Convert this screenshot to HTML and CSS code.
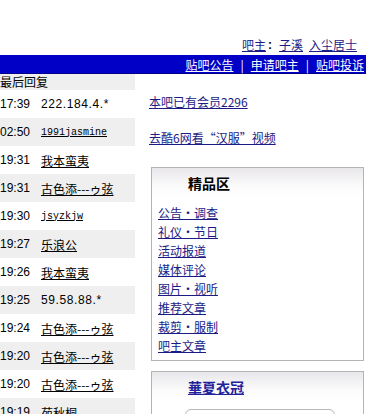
FILE: index.html
```html
<!DOCTYPE html>
<html>
<head>
<meta charset="utf-8">
<link rel="stylesheet" href="styles.css">
</head>
<body>
<div class="top">
  <div class="owners"><a href="#">吧主</a><b class="colon">:</b><a href="#">子溪</a><a class="gap" href="#">入尘居士</a></div>
</div>
<div class="nav">
  <a href="#">贴吧公告</a><span class="sep">|</span><a href="#">申请吧主</a><span class="sep">|</span><a href="#">贴吧投诉</a>
</div>
<div class="main">
  <div class="left">
    <div class="lhead">最后回复</div>
    <div class="row"><span class="t">17:39</span><span class="n ip">222.184.4.*</span></div>
    <div class="row g"><span class="t">02:50</span><a class="n mono" href="#">1991jasmine</a></div>
    <div class="row"><span class="t">19:31</span><a class="n" href="#">我本蛮夷</a></div>
    <div class="row g"><span class="t">19:31</span><a class="n" href="#">古色添---ゥ弦</a></div>
    <div class="row"><span class="t">19:30</span><a class="n mono" href="#">jsyzkjw</a></div>
    <div class="row g"><span class="t">19:27</span><a class="n" href="#">乐浪公</a></div>
    <div class="row"><span class="t">19:26</span><a class="n" href="#">我本蛮夷</a></div>
    <div class="row g"><span class="t">19:25</span><span class="n ip">59.58.88.*</span></div>
    <div class="row"><span class="t">19:24</span><a class="n" href="#">古色添---ゥ弦</a></div>
    <div class="row g"><span class="t">19:20</span><a class="n" href="#">古色添---ゥ弦</a></div>
    <div class="row"><span class="t">19:20</span><a class="n" href="#">古色添---ゥ弦</a></div>
    <div class="row g"><span class="t">19:19</span><a class="n" href="#">苑秋桐</a></div>
  </div>
  <div class="right">
    <div class="info"><a href="#">本吧已有会员2296</a></div>
    <div class="info"><a href="#">去酷6网看“汉服”视频</a></div>
    <div class="box">
      <div class="boxhead"><span class="title">精品区</span></div>
      <ul class="links">
        <li><a href="#">公告・调查</a></li>
        <li><a href="#">礼仪・节日</a></li>
        <li><a href="#">活动报道</a></li>
        <li><a href="#">媒体评论</a></li>
        <li><a href="#">图片・视听</a></li>
        <li><a href="#">推荐文章</a></li>
        <li><a href="#">裁剪・服制</a></li>
        <li><a href="#">吧主文章</a></li>
      </ul>
    </div>
    <div class="box box2">
      <div class="boxhead"><a class="title2" href="#">華夏衣冠</a></div>
      <div class="inner"></div>
    </div>
  </div>
</div>
</body>
</html>
```
FILE: styles.css
```css
html, body {
  margin: 0;
  padding: 0;
  background: #fff;
}
body {
  width: 366px;
  height: 414px;
  overflow: hidden;
  font-family: "Noto Sans CJK SC", "Liberation Sans", sans-serif;
  font-size: 12px;
  color: #000;
}
a {
  color: #1b1b86;
  text-decoration: underline;
}
.top {
  height: 55px;
  display: flex;
  align-items: flex-end;
  justify-content: flex-end;
  padding-right: 9px;
  box-sizing: border-box;
}
.owners {
  line-height: 16px;
  padding-bottom: 2px;
  display: flex;
}
.colon {
  font-weight: bold;
  width: 13px;
  padding-left: 2px;
  box-sizing: border-box;
  font-family: "Liberation Sans", sans-serif;
}
.gap {
  margin-left: 6px;
}
.nav {
  height: 19px;
  background: #0000c6;
  border-bottom: 1px solid #00008a;
  box-sizing: border-box;
  display: flex;
  justify-content: flex-end;
  align-items: center;
  padding-right: 2px;
  line-height: 17px;
}
.nav a {
  color: #fff;
}
.sep {
  color: #fff;
  margin: 0 7px;
}
.main {
  display: flex;
}
.left {
  width: 135px;
  flex: none;
}
.lhead {
  height: 16px;
  line-height: 16px;
  background: #efefef;
  white-space: nowrap;
}
.row {
  height: 28px;
  display: flex;
  align-items: center;
  white-space: nowrap;
}
.row.g {
  background: #efefef;
}
.t {
  width: 41px;
  flex: none;
  font-family: "Liberation Sans", sans-serif;
  font-size: 12px;
  color: #000;
}
.n {
  color: #000;
}
a.n {
  color: #000;
}
.mono {
  font-family: "Liberation Mono", monospace;
  font-size: 10px;
}
.ip {
  font-family: "Liberation Sans", sans-serif;
  font-size: 12px;
  letter-spacing: 0.6px;
}
.right {
  flex: 1;
  padding-left: 14px;
  padding-top: 20px;
}
.info {
  height: 36px;
  line-height: 16px;
  white-space: nowrap;
}
.box {
  margin-left: 2px;
  width: 213px;
  border: 1px solid #b4b4b4;
  box-sizing: border-box;
  margin-top: 1px;
}
.boxhead {
  height: 30px;
  background: linear-gradient(#e8e6ea, #fbfbfb 60%, #fff);
  display: flex;
  align-items: center;
  padding-left: 36px;
}
.title {
  font-weight: bold;
  font-size: 14px;
  color: #000;
}
.links {
  list-style: none;
  margin: 0;
  padding: 5px 0 5px 6px;
}
.links li {
  height: 19px;
  line-height: 19px;
}
.box2 {
  margin-top: 10px;
  height: 60px;
}
.title2 {
  font-weight: bold;
  font-size: 14px;
  color: #22229c;
}
.inner {
  margin: 7px 0 0 33px;
  width: 148px;
  height: 20px;
  border: 1px solid #b8b8b8;
  border-radius: 6px;
}
```
